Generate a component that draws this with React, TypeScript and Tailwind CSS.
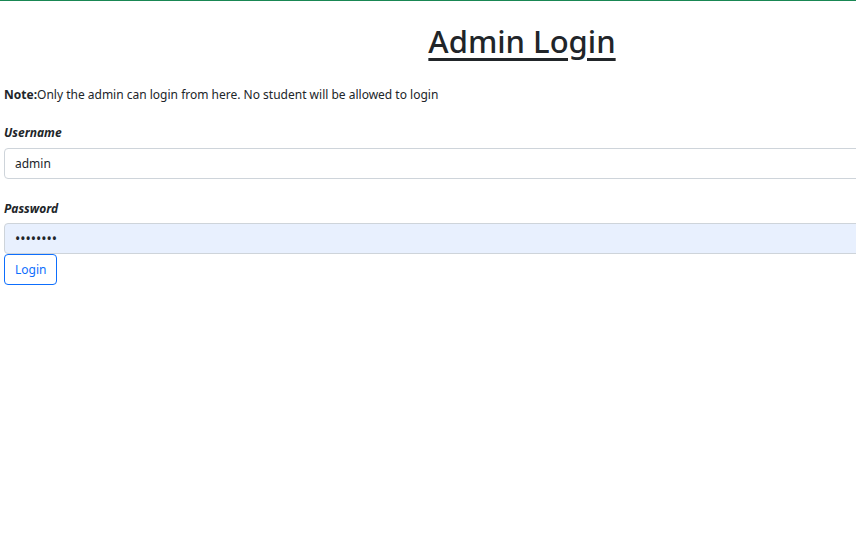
import React from "react";

export default function App() {
  return (
    <div className="w-[856px] h-[550px] overflow-hidden bg-white border-t border-[#198754]" style={{ fontFamily: '"Noto Sans", "Open Sans", sans-serif' }}>
      <div className="w-[1044px] px-[4px] text-[#212529]">
        <h1 className="text-center text-[31px] leading-[38px] font-medium underline underline-offset-[5px] decoration-[3px] mt-[21px] mb-[25px]">Admin Login</h1>
        <p className="text-[12px] leading-[20px] mb-[18px]"><b>Note:</b>Only the admin can login from here. No student will be allowed to login</p>
        <label className="block text-[12px] leading-[20px] font-bold italic mb-[5px]">Username</label>
        <input className="block w-full h-[31px] px-[10px] text-[12px] border border-[#ced4da] rounded-[4px] outline-none" defaultValue="admin" />
        <label className="block text-[12px] leading-[20px] font-bold italic mt-[20px] mb-[4px]">Password</label>
        <input type="password" className="block w-full h-[31px] px-[10px] text-[14px] border border-[#ced4da] rounded-[4px] bg-[#e8f0fe] outline-none" defaultValue="password" />
        <button className="block h-[31px] px-[10px] text-[12px] text-[#0d6efd] border border-[#0d6efd] rounded-[4px] bg-white">Login</button>
      </div>
    </div>
  );
}
